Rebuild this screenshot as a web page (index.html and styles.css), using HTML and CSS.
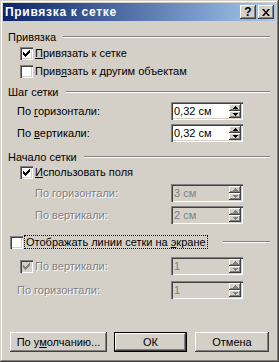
FILE: index.html
```html
<!DOCTYPE html>
<html>
<head>
<meta charset="utf-8">
<link rel="stylesheet" href="styles.css">
</head>
<body>
<div class="window">
  <div class="titlebar">
    <span class="title">Привязка к сетке</span>
    <div class="caption-btns">
      <span class="cbtn help">?</span>
      <span class="cbtn close"><svg width="8" height="7" viewBox="0 0 8 7"><path d="M0 0h2l2 2.5L6 0h2L5 3.5 8 7H6L4 4.5 2 7H0l3-3.5z" fill="#000"/></svg></span>
    </div>
  </div>
  <div class="content">
    <div class="group-hdr hdr1"><span>Привязка</span><i class="etch"></i></div>
    <div class="cbrow cb1"><span class="cb"><svg class="chk" width="7" height="7" viewBox="0 0 7 7"><path d="M0 2h1v1h1v1h1V3h1V2h1V1h1V0h1v3H6v1H5v1H4v1H3v1H2V6H1V5H0z" fill="#000"/></svg></span><span class="lbl"><u>П</u>ривязать к сетке</span></div>
    <div class="cbrow cb2"><span class="cb"></span><span class="lbl">Прив<u>я</u>зать к другим объектам</span></div>

    <div class="group-hdr hdr2"><span>Шаг сетки</span><i class="etch"></i></div>
    <div class="spinrow s1"><span class="slbl"><span>По <u>г</u>оризонтали:</span></span>
      <div class="spin"><span class="val">0,32 см</span><div class="sbtns"><span class="sb"><svg width="5" height="3" viewBox="0 0 5 3"><path d="M2 0h1v1h1v1h1v1H0V2h1V1h1z" /></svg></span><span class="sb"><svg width="5" height="3" viewBox="0 0 5 3"><path d="M0 0h5v1H4v1H3v1H2V2H1V1H0z" /></svg></span></div></div>
    </div>
    <div class="spinrow s2"><span class="slbl"><span>По <u>в</u>ертикали:</span></span>
      <div class="spin"><span class="val">0,32 см</span><div class="sbtns"><span class="sb"><svg width="5" height="3" viewBox="0 0 5 3"><path d="M2 0h1v1h1v1h1v1H0V2h1V1h1z" /></svg></span><span class="sb"><svg width="5" height="3" viewBox="0 0 5 3"><path d="M0 0h5v1H4v1H3v1H2V2H1V1H0z" /></svg></span></div></div>
    </div>

    <div class="group-hdr hdr3"><span>Начало сетки</span><i class="etch"></i></div>
    <div class="cbrow cb3"><span class="cb"><svg class="chk" width="7" height="7" viewBox="0 0 7 7"><path d="M0 2h1v1h1v1h1V3h1V2h1V1h1V0h1v3H6v1H5v1H4v1H3v1H2V6H1V5H0z" fill="#000"/></svg></span><span class="lbl"><u>И</u>спользовать поля</span></div>
    <div class="spinrow s3 dis"><span class="slbl ind"><span>По горизонтали:</span></span>
      <div class="spin"><span class="val">3 см</span><div class="sbtns"><span class="sb"><svg width="5" height="3" viewBox="0 0 5 3"><path d="M2 0h1v1h1v1h1v1H0V2h1V1h1z" /></svg></span><span class="sb"><svg width="5" height="3" viewBox="0 0 5 3"><path d="M0 0h5v1H4v1H3v1H2V2H1V1H0z" /></svg></span></div></div>
    </div>
    <div class="spinrow s4 dis"><span class="slbl ind"><span>По вертикали:</span></span>
      <div class="spin"><span class="val">2 см</span><div class="sbtns"><span class="sb"><svg width="5" height="3" viewBox="0 0 5 3"><path d="M2 0h1v1h1v1h1v1H0V2h1V1h1z" /></svg></span><span class="sb"><svg width="5" height="3" viewBox="0 0 5 3"><path d="M0 0h5v1H4v1H3v1H2V2H1V1H0z" /></svg></span></div></div>
    </div>

    <div class="group-hdr cbhdr"><span class="cb"></span><span class="focus">Отображать линии сетки на <u>э</u>кране</span><i class="etch"></i></div>
    <div class="spinrow s5 dis"><span class="slbl ind cbl"><span class="cb dcb"><svg class="chk" width="7" height="7" viewBox="0 0 7 7"><path d="M0 2h1v1h1v1h1V3h1V2h1V1h1V0h1v3H6v1H5v1H4v1H3v1H2V6H1V5H0z" fill="#808080"/></svg></span><span>По вертикали:</span></span>
      <div class="spin"><span class="val">1</span><div class="sbtns"><span class="sb"><svg width="5" height="3" viewBox="0 0 5 3"><path d="M2 0h1v1h1v1h1v1H0V2h1V1h1z" /></svg></span><span class="sb"><svg width="5" height="3" viewBox="0 0 5 3"><path d="M0 0h5v1H4v1H3v1H2V2H1V1H0z" /></svg></span></div></div>
    </div>
    <div class="spinrow s6 dis"><span class="slbl"><span>По горизонтали:</span></span>
      <div class="spin"><span class="val">1</span><div class="sbtns"><span class="sb"><svg width="5" height="3" viewBox="0 0 5 3"><path d="M2 0h1v1h1v1h1v1H0V2h1V1h1z" /></svg></span><span class="sb"><svg width="5" height="3" viewBox="0 0 5 3"><path d="M0 0h5v1H4v1H3v1H2V2H1V1H0z" /></svg></span></div></div>
    </div>

    <div class="buttons">
      <span class="btn b1"><span>По у<u>м</u>олчанию...</span></span>
      <span class="btn b2 default">ОК</span>
      <span class="btn b3">Отмена</span>
    </div>
  </div>
</div>
</body>
</html>
```

FILE: styles.css
```css
html, body {
  margin: 0;
  padding: 0;
  background: #d4d0c8;
}
body {
  font-family: "Liberation Sans", Arial, sans-serif;
  font-size: 11px;
  color: #000;
}
.window {
  width: 279px;
  height: 362px;
  box-sizing: border-box;
  padding: 3px;
  background: #d4d0c8;
  box-shadow: inset -1px -1px #404040, inset 1px 1px #d4d0c8, inset -2px -2px #808080, inset 2px 2px #fff;
}
.titlebar {
  height: 18px;
  display: flex;
  align-items: center;
  justify-content: space-between;
  padding: 0 2px;
  background: linear-gradient(to right, #0a246a, #a6caf0);
}
.title {
  color: #fff;
  font-weight: bold;
  font-size: 12px;
  letter-spacing: 0.7px;
}
.caption-btns {
  display: flex;
  gap: 2px;
}
.cbtn {
  width: 16px;
  height: 14px;
  box-sizing: border-box;
  background: #d4d0c8;
  box-shadow: inset -1px -1px #404040, inset 1px 1px #fff, inset -2px -2px #808080;
  display: flex;
  align-items: center;
  justify-content: center;
  font-weight: bold;
  font-size: 12px;
  line-height: 12px;
}
.content {
  padding: 8px 6px 0 5px;
}
.group-hdr {
  display: flex;
  align-items: center;
  height: 16px;
}
.etch {
  flex: 1;
  height: 0;
  border-top: 1px solid #808080;
  border-bottom: 1px solid #fff;
  margin-left: 7px;
}
.hdr2 { margin-top: 6px; }
.hdr3 { margin-top: 7px; }
.cbrow {
  display: flex;
  align-items: center;
  height: 13px;
  padding-left: 12px;
}
.cb1 { margin-top: 2px; }
.cb2 { margin-top: 5px; }
.cb3 { margin-top: 1px; }
.cb {
  width: 13px;
  height: 13px;
  flex: none;
  box-sizing: border-box;
  background: #fff;
  box-shadow: inset 1px 1px #808080, inset 2px 2px #404040, inset -1px -1px #fff, inset -2px -2px #d4d0c8;
  display: flex;
  align-items: center;
  justify-content: center;
}
.cb .chk { display: block; }
.cb.dcb { background: #d4d0c8; }
.lbl {
  margin-left: 2px;
  line-height: 13px;
}
u { text-decoration: underline; text-underline-offset: 1px; }
.spinrow {
  display: flex;
  align-items: center;
  height: 18px;
}
.s1 { margin-top: 2px; }
.s2 { margin-top: 4px; }
.s3 { margin-top: 5px; }
.s4 { margin-top: 4px; }
.s5 { margin-top: 8px; }
.s6 { margin-top: 6px; }
.slbl {
  width: 163px;
  padding-left: 9px;
  box-sizing: border-box;
  display: flex;
  align-items: center;
}
.slbl.ind { padding-left: 27px; }
.slbl.cbl { padding-left: 12px; }
.slbl.cbl .cb { margin-right: 2px; }
.dis .slbl {
  color: #808080;
  text-shadow: 1px 1px 0 #fff;
}
.spin {
  width: 72px;
  height: 18px;
  box-sizing: border-box;
  padding: 2px;
  display: flex;
  background: #fff;
  box-shadow: inset 1px 1px #808080, inset 2px 2px #404040, inset -1px -1px #fff, inset -2px -2px #d4d0c8;
}
.val {
  flex: 1;
  line-height: 14px;
  padding-left: 1px;
}
.dis .spin { background: #d4d0c8; }
.dis .val { color: #808080; }
.sbtns {
  width: 12px;
  display: flex;
  flex-direction: column;
}
.sb {
  flex: 1;
  box-sizing: border-box;
  background: #d4d0c8;
  box-shadow: inset -1px -1px #404040, inset 1px 1px #fff, inset -2px -2px #808080;
  display: flex;
  align-items: center;
  justify-content: center;
}
.sb svg { display: block; fill: #000; }
.dis .sb svg { fill: #808080; }
.cbhdr {
  margin-top: 11px;
  height: 14px;
  padding-left: 2px;
}
.cbhdr .focus {
  margin-left: 2px;
  padding: 0 1px;
  line-height: 12px;
  outline: 1px dotted #000;
  outline-offset: 0;
}
.cbhdr .etch { margin-left: 16px; }
.buttons {
  margin-top: 33px;
  display: flex;
  padding-left: 2px;
  gap: 7px;
}
.btn {
  height: 20px;
  box-sizing: border-box;
  display: flex;
  align-items: center;
  justify-content: center;
  background: #d4d0c8;
  box-shadow: inset -1px -1px #404040, inset 1px 1px #fff, inset -2px -2px #808080;
}
.b1 { width: 97px; }
.b2 { width: 73px; }
.b3 { width: 74px; margin-left: 1px; }
.btn.default {
  border: 1px solid #000;
}
```
